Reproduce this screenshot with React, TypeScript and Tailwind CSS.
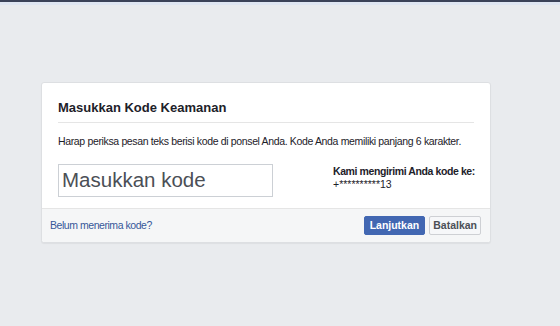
import React from "react";

export default function App() {
  return (
    <div
      className="w-[560px] h-[326px] bg-[#e9ebee] overflow-hidden"
      style={{ fontFamily: "Arial, 'Liberation Sans', Helvetica, sans-serif" }}
    >
      <div className="h-[2px] bg-[#3b4258]" />
      <div className="h-[3px] bg-[#dfe6f2]" />
      <div className="pt-[77px] pl-[41px]">
        <div className="w-[450px] h-[161px] bg-white border border-[#dddfe2] rounded-[3px] shadow-[0_1px_1px_rgba(0,0,0,0.05)] flex flex-col">
          <div className="px-[16px] flex-1">
            <div className="pt-[17px] pb-[6px] border-b border-[#e5e5e5] text-[13px] font-bold text-[#1d2129] leading-[16px]">
              Masukkan Kode Keamanan
            </div>
            <div className="pt-[11px] text-[10.5px] tracking-[-0.35px] text-[#1d2129] leading-[14px] whitespace-nowrap">
              Harap periksa pesan teks berisi kode di ponsel Anda. Kode Anda memiliki panjang 6 karakter.
            </div>
            <div className="flex pt-[16px]">
              <div className="w-[215px] shrink-0 h-[33px] border border-[#ccd0d5] flex items-center px-[3px] text-[20.5px] text-[#4b4f56]">
                Masukkan kode
              </div>
              <div className="ml-[60px] pt-[1px] leading-[13px] text-[#1d2129] whitespace-nowrap">
                <div className="font-bold text-[10.5px] tracking-[-0.4px]">Kami mengirimi Anda kode ke:</div>
                <div className="text-[10.5px]">+**********13</div>
              </div>
            </div>
          </div>
          <div className="h-[34px] bg-[#f5f6f7] border-t border-[#e5e5e5] flex items-center pl-[8px] pr-[9px] rounded-b-[3px]">
            <div className="text-[10.5px] tracking-[-0.45px] text-[#365899]">Belum menerima kode?</div>
            <div className="ml-auto flex gap-[4px]">
              <div className="h-[19px] px-[5px] flex items-center bg-[#4267b2] border border-[#4267b2] rounded-[2px] text-white text-[10.5px] font-bold">
                Lanjutkan
              </div>
              <div className="h-[19px] px-[3px] flex items-center bg-[#f6f7f9] border border-[#ced0d4] rounded-[2px] text-[#4b4f56] text-[10.5px] font-bold">
                Batalkan
              </div>
            </div>
          </div>
        </div>
      </div>
    </div>
  );
}
